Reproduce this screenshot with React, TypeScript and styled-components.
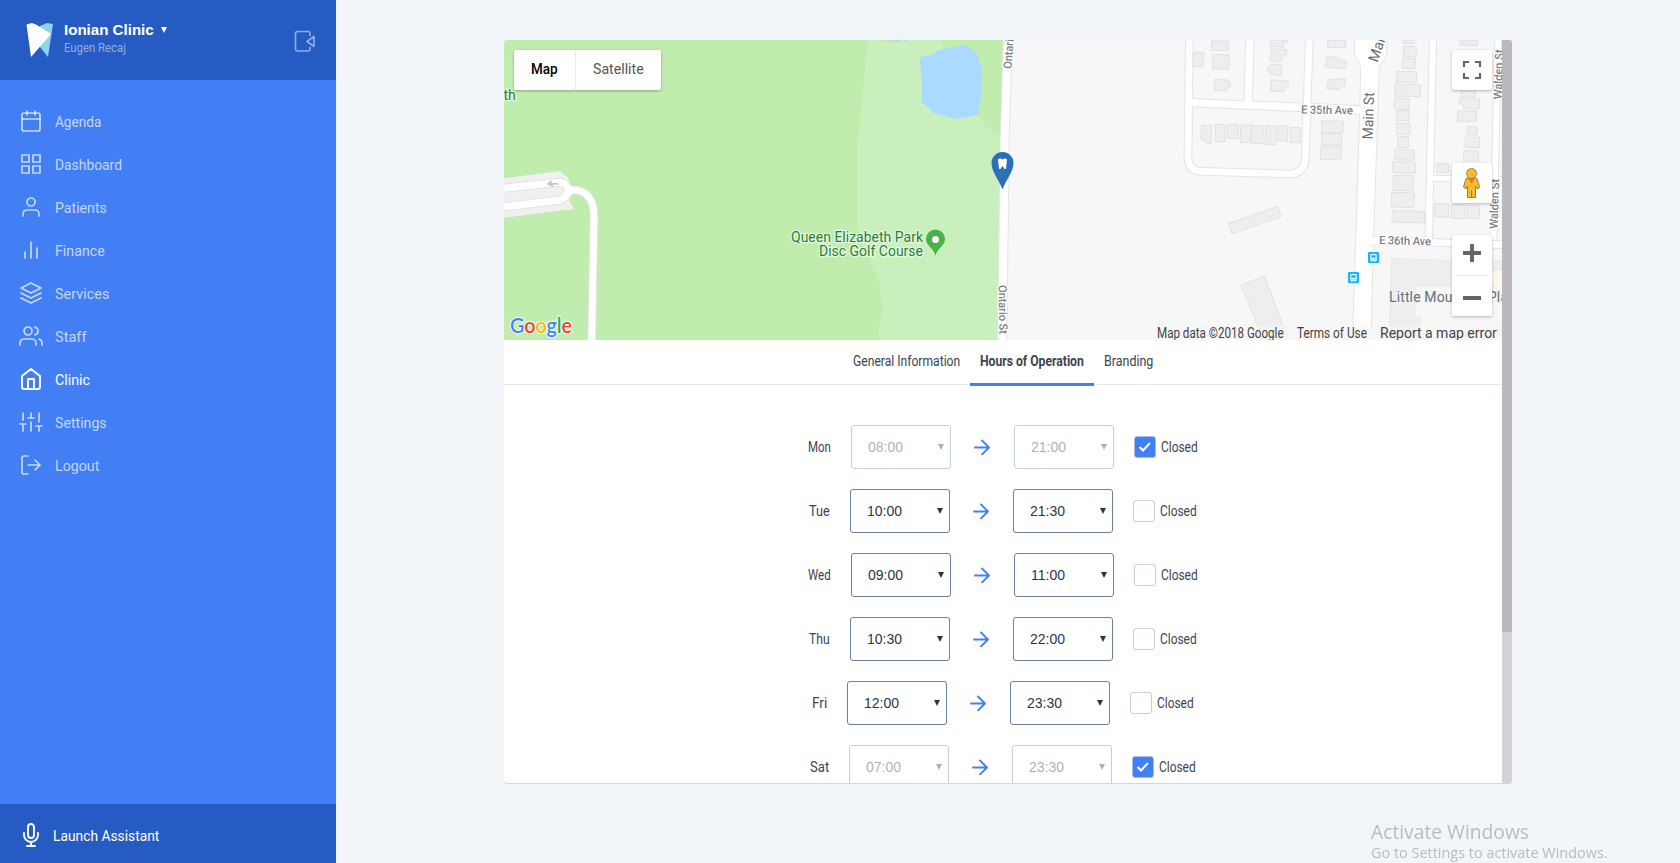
import React, { useLayoutEffect, useRef, useState } from 'react';
import styled, { createGlobalStyle } from 'styled-components';

const GlobalStyle = createGlobalStyle`
  * { box-sizing: border-box; }
  body {
    margin: 0;
    background: #f2f6fb;
    font-family: Roboto, "Liberation Sans", sans-serif;
    color: #323c47;
    overflow: hidden;
  }
`;

/* ---------- condensed text ---------- */

const CondensedBox = styled.span<{ $width: number }>`
  display: block;
  flex: none;
  width: ${(p) => p.$width}px;
  white-space: nowrap;
`;

const CondensedInner = styled.span`
  display: inline-block;
  transform-origin: left center;
`;

function Condensed({ width, children }: { width: number; children: string }) {
  const ref = useRef<HTMLSpanElement>(null);
  const [ratio, setRatio] = useState(1);
  useLayoutEffect(() => {
    if (ref.current) setRatio(width / ref.current.offsetWidth);
  }, [width, children]);
  return (
    <CondensedBox $width={width}>
      <CondensedInner ref={ref} style={{ transform: `scaleX(${ratio})` }}>
        {children}
      </CondensedInner>
    </CondensedBox>
  );
}

/* ---------- shell ---------- */

const Page = styled.div`
  display: flex;
  width: 1680px;
  height: 863px;
  background: #f2f6fb;
`;

const Sidebar = styled.aside`
  display: flex;
  flex-direction: column;
  width: 336px;
  height: 100%;
  background: #427ef4;
  color: #fff;
`;

const SidebarHeader = styled.header`
  display: flex;
  align-items: flex-start;
  height: 80px;
  padding: 20px 20px 0 26px;
  background: #265bc3;
`;

const Account = styled.div`
  flex: 1;
  padding-left: 11px;
`;

const ClinicName = styled.div`
  display: flex;
  align-items: center;
  gap: 7px;
  height: 20px;
  font: 700 15px/20px "Liberation Sans", sans-serif;
`;

const UserName = styled.div`
  height: 16px;
  font-size: 13px;
  line-height: 15px;
  color: rgba(255, 255, 255, 0.5);
`;

const CaretIcon = styled.svg`
  display: block;
  flex: none;
  fill: currentColor;
`;

const CollapseIcon = styled.svg`
  display: block;
  margin-top: 9px;
  opacity: 0.5;
`;

const Nav = styled.nav`
  flex: 1;
  padding-top: 20px;
`;

const NavItem = styled.a<{ $active?: boolean }>`
  display: flex;
  align-items: center;
  gap: 12px;
  height: 43px;
  padding-left: 19px;
  font-size: 15.5px;
  font-weight: 400;
  color: ${(p) => (p.$active ? '#fff' : 'rgba(255, 255, 255, 0.7)')};
`;

const LineIcon = styled.svg<{ $stroke?: number }>`
  display: block;
  flex: none;
  width: 24px;
  height: 24px;
  margin-top: -1px;
  fill: none;
  stroke: currentColor;
  stroke-width: ${(p) => p.$stroke ?? 1.5};
  stroke-linecap: round;
  stroke-linejoin: round;
`;

const Assistant = styled.footer`
  display: flex;
  align-items: center;
  gap: 10px;
  height: 59px;
  padding: 4px 0 0 19px;
  background: #265bc3;
  font-size: 15.5px;
`;

const Main = styled.main`
  flex: 1;
  padding: 40px 168px;
`;

const Card = styled.section`
  display: flex;
  width: 1008px;
  height: 743px;
  border-radius: 3px;
  overflow: hidden;
  background: #fff;
  box-shadow: 0 1px 1px rgba(0, 0, 0, 0.14);
`;

const CardBody = styled.div`
  width: 998px;
  height: 743px;
  overflow: hidden;
`;

const ScrollTrack = styled.div`
  width: 10px;
  background: #d3d3d3;
`;

const ScrollThumb = styled.div`
  height: 592px;
  background: #bbb8b9;
`;

/* ---------- map ---------- */

const MapArea = styled.div`
  position: relative;
  height: 300px;
  overflow: hidden;
`;

const MapCanvas = styled.svg`
  display: block;
  font-family: Roboto, sans-serif;
`;

const Control = styled.div`
  position: absolute;
  background: #fff;
  border-radius: 2px;
  box-shadow: 0 1px 3px rgba(0, 0, 0, 0.28);
`;

const MapTypes = styled(Control)`
  top: 10px;
  left: 10px;
  display: flex;
  width: 147px;
  height: 40px;
  font-size: 14px;
  line-height: 38px;
`;

const MapType = styled.div<{ $active?: boolean }>`
  display: flex;
  justify-content: center;
  width: ${(p) => (p.$active ? 62 : 85)}px;
  color: ${(p) => (p.$active ? '#000' : '#565656')};
  font-weight: ${(p) => (p.$active ? 500 : 400)};
  border-right: ${(p) => (p.$active ? '1px solid #ebebeb' : '0')};
`;

const SquareControl = styled(Control)<{ $top: number; $height?: number }>`
  top: ${(p) => p.$top}px;
  right: 10px;
  width: 40px;
  height: ${(p) => p.$height ?? 40}px;

  svg { display: block; }
`;

const Attribution = styled.div`
  position: absolute;
  right: 0;
  bottom: 0;
  display: flex;
  gap: 13px;
  height: 14px;
  padding: 0 5px 0 6px;
  background: rgba(245, 245, 245, 0.7);
  font-size: 14px;
  line-height: 15px;
  color: #444;
`;

/* ---------- tabs and hours ---------- */

const Tabs = styled.div`
  display: flex;
  justify-content: center;
  height: 45px;
  border-bottom: 1px solid #e3e8ee;
`;

const Tab = styled.div<{ $active?: boolean }>`
  height: 46px;
  padding: 0 10px;
  font-size: 14.5px;
  line-height: 44px;
  color: #3b4450;
  font-weight: ${(p) => (p.$active ? 700 : 400)};
  border-bottom: ${(p) => (p.$active ? '3px solid #427ef4' : '0')};
`;

const Hours = styled.div`
  display: flex;
  flex-direction: column;
  gap: 20px;
  padding-top: 40px;
`;

const DayRow = styled.div`
  display: flex;
  justify-content: center;
  align-items: center;
  height: 44px;
  font-size: 14.5px;
  color: #3b4450;
`;

const TimeSelect = styled.div<{ $disabled: boolean }>`
  display: flex;
  align-items: center;
  justify-content: space-between;
  width: 100px;
  height: 44px;
  padding: 0 6px 0 16px;
  border: 1px solid #6f81a0;
  border-radius: 3px;
  font: 14px "Liberation Sans", sans-serif;
  color: #2a3646;
  opacity: ${(p) => (p.$disabled ? 0.38 : 1)};
`;

const DayLabel = styled.div`
  margin-right: 20px;
`;

const ArrowCell = styled.div`
  display: flex;
  justify-content: center;
  width: 63px;
  padding-right: 1px;
  color: #427ef4;
`;

const Check = styled.span<{ $checked: boolean }>`
  display: flex;
  align-items: center;
  justify-content: center;
  width: 22px;
  height: 22px;
  margin: 0 5px 0 20px;
  border: 1px solid ${(p) => (p.$checked ? '#a9bfe8' : '#c4cedd')};
  border-radius: 3px;
  background: ${(p) => (p.$checked ? '#427ef4' : '#fff')};
`;

const Watermark = styled.div`
  position: fixed;
  left: 1371px;
  top: 818px;
  font-family: "Open Sans", "Noto Sans", sans-serif;
  color: #b8bbbf;
`;

const WatermarkTitle = styled.div`
  height: 25px;
  font-size: 19.5px;
  line-height: 28px;
`;

const WatermarkText = styled.div`
  height: 20px;
  font-size: 14.5px;
  line-height: 20px;
`;

/* ---------- data ---------- */

const navItems: { label: string; width: number; active?: boolean; icon: React.ReactNode }[] = [
  { label: 'Agenda', width: 46.5, icon: <><rect x="3" y="4" width="18" height="18" rx="2" /><path d="M16 2v4M8 2v4M3 10h18" /></> },
  { label: 'Dashboard', width: 67, icon: <path strokeLinejoin="miter" d="M3 3h7v7H3zM14 3h7v7h-7zM14 14h7v7h-7zM3 14h7v7H3z" /> },
  { label: 'Patients', width: 52, icon: <><path d="M20 21v-2a4 4 0 0 0-4-4H8a4 4 0 0 0-4 4v2" /><circle cx="12" cy="7" r="4" /></> },
  { label: 'Finance', width: 49.5, icon: <path d="M18 20V10M12 20V4M6 20v-6" /> },
  { label: 'Services', width: 54, icon: <path d="M12 2 2 7l10 5 10-5-10-5zM2 17l10 5 10-5M2 12l10 5 10-5" /> },
  { label: 'Staff', width: 31, icon: <><path d="M17 21v-2a4 4 0 0 0-4-4H5a4 4 0 0 0-4 4v2M23 21v-2a4 4 0 0 0-3-3.87M16 3.13a4 4 0 0 1 0 7.75" /><circle cx="9" cy="7" r="4" /></> },
  { label: 'Clinic', width: 35, active: true, icon: <path d="M3 9l9-7 9 7v11a2 2 0 0 1-2 2H5a2 2 0 0 1-2-2zM9 22V12h6v10" /> },
  { label: 'Settings', width: 52, icon: <path d="M4 21v-7M4 10V3M12 21v-9M12 8V3M20 21v-5M20 12V3M1 14h6M9 8h6M17 16h6" /> },
  { label: 'Logout', width: 44, icon: <path d="M9 21H5a2 2 0 0 1-2-2V5a2 2 0 0 1 2-2h4M16 17l5-5-5-5M21 12H9" /> },
];

const days = [
  { label: 'Mon', width: 23, from: '08:00', to: '21:00', closed: true },
  { label: 'Tue', width: 21, from: '10:00', to: '21:30', closed: false },
  { label: 'Wed', width: 23, from: '09:00', to: '11:00', closed: false },
  { label: 'Thu', width: 21, from: '10:30', to: '22:00', closed: false },
  { label: 'Fri', width: 15, from: '12:00', to: '23:30', closed: false },
  { label: 'Sat', width: 19, from: '07:00', to: '23:30', closed: true },
];

const houses: [number, number, number, number][] = [
  [245, 32, 51, 29], [248, 73, 50, 44], [191, 67, 30, 42],
  [594, 30, 53, 22],
  [820, 30, 33, 10], [821, 49, 38, 30], [818, 85, 38, 30], [800, 124, 60, 32], [795, 162, 77, 36],
  [794, 205, 44, 32], [800, 241, 38, 31], [800, 280, 41, 32], [803, 319, 33, 33], [794, 358, 59, 31],
  [788, 395, 69, 33], [790, 436, 61, 45], [785, 487, 68, 44], [787, 542, 97, 34],
  [575, 272, 65, 35], [575, 310, 60, 35], [572, 350, 63, 38],
  [257, 283, 29, 52], [293, 283, 32, 42], [332, 284, 32, 53], [366, 287, 34, 53], [407, 287, 31, 56],
  [444, 287, 30, 46], [482, 292, 30, 45],
  [990, 30, 53, 15], [994, 170, 43, 30], [983, 242, 57, 32], [1012, 290, 30, 25], [1006, 321, 43, 31], [1001, 362, 45, 31],
  [921, 400, 35, 27], [914, 520, 42, 41], [964, 524, 42, 41], [1013, 527, 36, 38],
];

/* ---------- pieces ---------- */

const Caret = ({ size }: { size: number }) => (
  <CaretIcon width={size} height={size} viewBox="0 0 6 6"><path d="M0 0h6L3 6z" /></CaretIcon>
);

const roadSet = (paths: [string, number][]) => (
  <g fill="none" strokeLinejoin="round">
    {paths.map(([d, w]) => <path key={'e' + d} d={d} stroke="#e4e4e4" strokeWidth={w + 6} />)}
    {paths.map(([d, w]) => <path key={'f' + d} d={d} stroke="#fff" strokeWidth={w} />)}
  </g>
);

function Bus({ x, y }: { x: number; y: number }) {
  return (
    <g transform={`translate(${x} ${y})`}>
      <rect width="33" height="33" rx="3" fill="#12b5ff" />
      <path d="M7 7q9-4 19 0v19h-4v3h-3v-3h-6v3h-3v-3H7z" fill="#fff" />
      <path d="M10 10h13v7H10zM10 20h4v3h-4zM19 20h4v3h-4z" fill="#12b5ff" />
    </g>
  );
}

function MapDrawing() {
  return (
    <MapCanvas width="998" height="300" viewBox="504 40 998 300">
      <rect x="504" y="40" width="998" height="300" fill="#f7f7f7" />
      <path d="M504 40H1006L1001 145 999 340H504z" fill="#c0ecae" />

      <g transform="translate(780 30) scale(.33333)">
        <path d="M264 30 232 345V600L270 690 298 760 309 840 298 880 297 930H656L660 322 620 290 592 255 493 55 480 30z" fill="#c9f0bc" />
        <path d="M592 255 606 190V115L590 70 556 45 493 55 480 30H680L660 322 620 290z" fill="#c0ecae" />
        <path d="M418 90 423 80 455 75 475 60 556 45 590 70 606 115V190L593 255 527 267 463 250 424 215 426 180 423 120z" fill="#aadaff" />
        <path d="M333 30H360L358 36 342 35zM371 30H383L380 34H374z" fill="#aadaff" />
        <path d="M282 30H333L342 36 300 35z" fill="#c0ecae" />
        {roadSet([['M684 20 674 320 667 940', 24]])}
      </g>

      <g transform="translate(500 30) scale(.33333)">
        <path d="M0 446 180 423 207 446 209 515 222 537 0 565z" fill="#f0f0f0" />
        {roadSet([
          ['M0 476 178 457C212 457 212 503 180 510L0 532', 21],
          ['M207 480C260 475 283 510 282 560L275 940', 20],
        ])}
        <path d="M204 484h14" stroke="#fff" strokeWidth="20" />
        <path d="M175 459h-20v-8l-16 11 20 10v-8h16z" fill="#c3c5dc" />
      </g>

      <g transform="translate(1130 30) scale(.33333)">
        <path d="M785 685 966 692H1116V930H778z" fill="#eeeeee" stroke="#e3e3e3" strokeWidth="2" />
        <path d="M858 768H1120V930H872V862H853z" fill="#f7f7f7" stroke="#e3e3e3" strokeWidth="2" />
        <path d="M1080 720h40v75l-40-40z" fill="#fdf5ec" />
        <path d="M1080 720h40M1087 765l33 33M1098 890l22-22" fill="none" stroke="#fbdcb8" strokeWidth="2" />
        {roadSet([
          ['M178 20 174 385Q176 423 215 424L480 432Q520 430 526 390L538 20', 20],
          ['M360 20 354 215', 22],
          ['M166 217 700 240', 22],
          ['M909 20 896 630', 19],
          ['M725 632 1120 644', 20],
          ['M1105 20 1090 630', 18],
          ['M905 445 1120 450', 16],
        ])}
        <path d="M674 20V75L692 110 690 225 667 940H723L730 640 748 110 770 75V20z" fill="#fff" stroke="#e4e4e4" strokeWidth="3" />
        <path d="M680 230h20v20h-20zM722 622h20v20h-20z" fill="#fff" />
        <g fill="#eeeeee" stroke="#dedede" strokeWidth="2.5">
          {houses.map(([x, y, w, h]) => (
            <rect key={`${x}-${y}`} x={x} y={y} width={w} height={h} transform={`rotate(1.5 ${x} ${y})`} />
          ))}
          <path d="M422 30h50v8h-12v14l-39-3zM424 57l46 2-1 16-10 1-3 18-36-1zM424 102l31 3-2 32-31-3v-8l-9-1v-14l11-1zM423 150l52 3-1 17-12 1-1 14-40-2z" />
          <path d="M589 79l31 3v7l30 3-3 24-61-4zM595 150l52-5-3 25-15 1v8l-38-3zM255 147l40 3v9l7 1-1 13-8 1-2 9-38-2z" />
          <path d="M215 286l30 1-2 53-17-2v-9l-13-1zM989 205l60 2-2 30-47-2v-12l-12-1z" />
          <path d="M295 580 443 529 453 560 305 611zM333 766 403 738 480 940H405z" />
        </g>
        <Bus x={714} y={666} />
        <Bus x={654} y={726} />
      </g>

      <g fill="#7d8083" fontSize="11.5" fontWeight="500" stroke="#fff" strokeWidth="2.5" paintOrder="stroke" strokeLinejoin="round">
        <text transform="translate(1011.5 69) rotate(-86)" textLength="36" lengthAdjust="spacingAndGlyphs">Ontario</text>
        <text transform="translate(998.5 285) rotate(89)" textLength="49">Ontario St</text>
        <text transform="translate(1301 113.500) rotate(1)" textLength="52">E 35th Ave</text>
        <text transform="translate(1379 244) rotate(1.5)" textLength="52">E 36th Ave</text>
        <text transform="translate(1501.5 99.5) rotate(-88)" textLength="50">Walden St</text>
        <text transform="translate(1497.5 229) rotate(-88)" textLength="50">Walden St</text>
      </g>
      <g fill="#666f76" fontSize="14.5" stroke="#fff" strokeWidth="2.5" paintOrder="stroke" strokeLinejoin="round">
        <text transform="translate(1372.5 139.5) rotate(-88)" textLength="47" lengthAdjust="spacingAndGlyphs">Main St</text>
        <text transform="translate(1377.5 63) rotate(-71)">Main</text>
        <text x="1389" y="302" fontSize="14" textLength="119" fill="#5d737d" stroke="#f4f4f4">Little Mountain Pla</text>
      </g>
      <g fill="#22803a" fontSize="14" stroke="#e6f8df" strokeWidth="2.5" paintOrder="stroke" strokeLinejoin="round">
        <text x="503.500" y="100">th</text>
        <text x="791" y="242" textLength="132">Queen Elizabeth Park</text>
        <text x="819" y="256" textLength="104">Disc Golf Course</text>
      </g>

      <path d="M935.500 256C934 248 926 246 926 239a9.500 9.500 0 0 1 19 0c0 7-8 9-9.500 17z" fill="#4bb14b" />
      <circle cx="935.500" cy="239.500" r="3.500" fill="#fff" />
      <path d="M1002.500 189.500C999 180 991.500 172 991.500 163a11 11 0 0 1 22 0c0 9-7.500 17-11 26.500z" fill="#2c70b8" />
      <path d="M998 159l2.500-.5 2 1 2-1 2.500.5-1 10h-1.500l-2-3-2 3H999z" fill="#fff" />

      <text x="510" y="332.500" fontSize="21.500" fontWeight="600" fontFamily="Lato, sans-serif" textLength="62" lengthAdjust="spacingAndGlyphs" stroke="#eefae9" strokeWidth="2.500" paintOrder="stroke">
        <tspan fill="#4285f4">G</tspan><tspan fill="#ea4335">o</tspan><tspan fill="#fbbc05">o</tspan><tspan fill="#4285f4">g</tspan><tspan fill="#34a853">l</tspan><tspan fill="#ea4335">e</tspan>
      </text>
    </MapCanvas>
  );
}

function MapPanel() {
  return (
    <MapArea>
      <MapDrawing />
      <MapTypes>
        <MapType $active><Condensed width={27}>Map</Condensed></MapType>
        <MapType><Condensed width={50.5}>Satellite</Condensed></MapType>
      </MapTypes>
      <SquareControl $top={10}>
        <svg width="40" height="40" viewBox="0 0 40 40">
          <path d="M12 17v-5h5M23 12h5v5M28 23v5h-5M17 28h-5v-5" fill="none" stroke="#666" strokeWidth="2.2" />
        </svg>
      </SquareControl>
      <SquareControl $top={123}>
        <svg width="40" height="40" viewBox="0 0 40 40">
          <path d="M14 15.500 11.500 24l2 2 2-3v11.500h8V23l2.200 3 2-2L25 15.500q-5-3-11 0z" fill="#fbbb2c" stroke="#8a7148" strokeWidth=".9" />
          <path d="M16 15.500h7l-3.500 5z" fill="#e3782e" />
          <circle cx="19.500" cy="10.500" r="5" fill="#fbbb2c" stroke="#8a7148" strokeWidth=".8" />
          <path d="M19.500 27v7" stroke="#a9802f" strokeWidth="1" />
        </svg>
      </SquareControl>
      <SquareControl $top={195} $height={81}>
        <svg width="40" height="81" viewBox="0 0 40 81">
          <path d="M11 18h18M20 9v18M11 63h18" stroke="#666" strokeWidth="4" />
          <path d="M5 40.500h30" stroke="#e6e6e6" />
        </svg>
      </SquareControl>
      <Attribution>
        <Condensed width={127}>Map data ©2018 Google</Condensed>
        <Condensed width={70}>Terms of Use</Condensed>
        <Condensed width={117}>Report a map error</Condensed>
      </Attribution>
    </MapArea>
  );
}

export default function App() {
  return (
    <>
      <GlobalStyle />
      <Page>
        <Sidebar>
          <SidebarHeader>
            <svg width="27" height="38" viewBox="0 0 27 38">
              <path d="M14 6 21 3l6 1-5 33-8-10z" fill="#8ed3f3" />
              <path d="M.5 4.500 6 3l5 2 14 9L5 37z" fill="#fff" />
            </svg>
            <Account>
              <ClinicName><Condensed width={89.5}>Ionian Clinic</Condensed><Caret size={6} /></ClinicName>
              <UserName><Condensed width={62}>Eugen Recaj</Condensed></UserName>
            </Account>
            <CollapseIcon width="22" height="26" viewBox="0 0 22 26" fill="none" stroke="#fff" strokeWidth="1.600">
              <path d="M16 7V4.500a2 2 0 0 0-2-2H3.500a2 2 0 0 0-2 2v15.500a2 2 0 0 0 2 2H14a2 2 0 0 0 2-2v-2M20 7.500v10L13 12.500z" strokeLinejoin="round" />
            </CollapseIcon>
          </SidebarHeader>
          <Nav>
            {navItems.map((item) => (
              <NavItem key={item.label} $active={item.active}>
                <LineIcon viewBox="0 0 24 24" $stroke={item.active ? 1.9 : 1.7}>{item.icon}</LineIcon>
                <Condensed width={item.width}>{item.label}</Condensed>
              </NavItem>
            ))}
          </Nav>
          <Assistant>
            <LineIcon viewBox="0 0 24 24" $stroke={1.9}>
              <path d="M12 1a3 3 0 0 0-3 3v8a3 3 0 0 0 6 0V4a3 3 0 0 0-3-3zM19 10v2a7 7 0 0 1-14 0v-2M12 19v4M8 23h8" />
            </LineIcon>
            <Condensed width={106}>Launch Assistant</Condensed>
          </Assistant>
        </Sidebar>
        <Main>
          <Card>
            <CardBody>
              <MapPanel />
              <Tabs>
                <Tab><Condensed width={107}>General Information</Condensed></Tab>
                <Tab $active><Condensed width={104}>Hours of Operation</Condensed></Tab>
                <Tab><Condensed width={49}>Branding</Condensed></Tab>
              </Tabs>
              <Hours>
                {days.map((day) => (
                  <DayRow key={day.label}>
                    <DayLabel><Condensed width={day.width}>{day.label}</Condensed></DayLabel>
                    <TimeSelect $disabled={day.closed}>{day.from}<Caret size={6} /></TimeSelect>
                    <ArrowCell>
                      <svg width="16" height="16" viewBox="0 0 16 16" fill="none" stroke="currentColor" strokeWidth="1.800" strokeLinecap="round" strokeLinejoin="round">
                        <path d="M1 8.500h14M8 1.500l7 7-7 7" />
                      </svg>
                    </ArrowCell>
                    <TimeSelect $disabled={day.closed}>{day.to}<Caret size={6} /></TimeSelect>
                    <Check $checked={day.closed}>
                      {day.closed && (
                        <svg width="14" height="12" viewBox="0 0 14 12" fill="none" stroke="#fff" strokeWidth="2">
                          <path d="M1.500 6 5 9.500 12 2" />
                        </svg>
                      )}
                    </Check>
                    <Condensed width={37}>Closed</Condensed>
                  </DayRow>
                ))}
              </Hours>
            </CardBody>
            <ScrollTrack><ScrollThumb /></ScrollTrack>
          </Card>
        </Main>
      </Page>
      <Watermark>
        <WatermarkTitle><Condensed width={158}>Activate Windows</Condensed></WatermarkTitle>
        <WatermarkText><Condensed width={237}>Go to Settings to activate Windows.</Condensed></WatermarkText>
      </Watermark>
    </>
  );
}
